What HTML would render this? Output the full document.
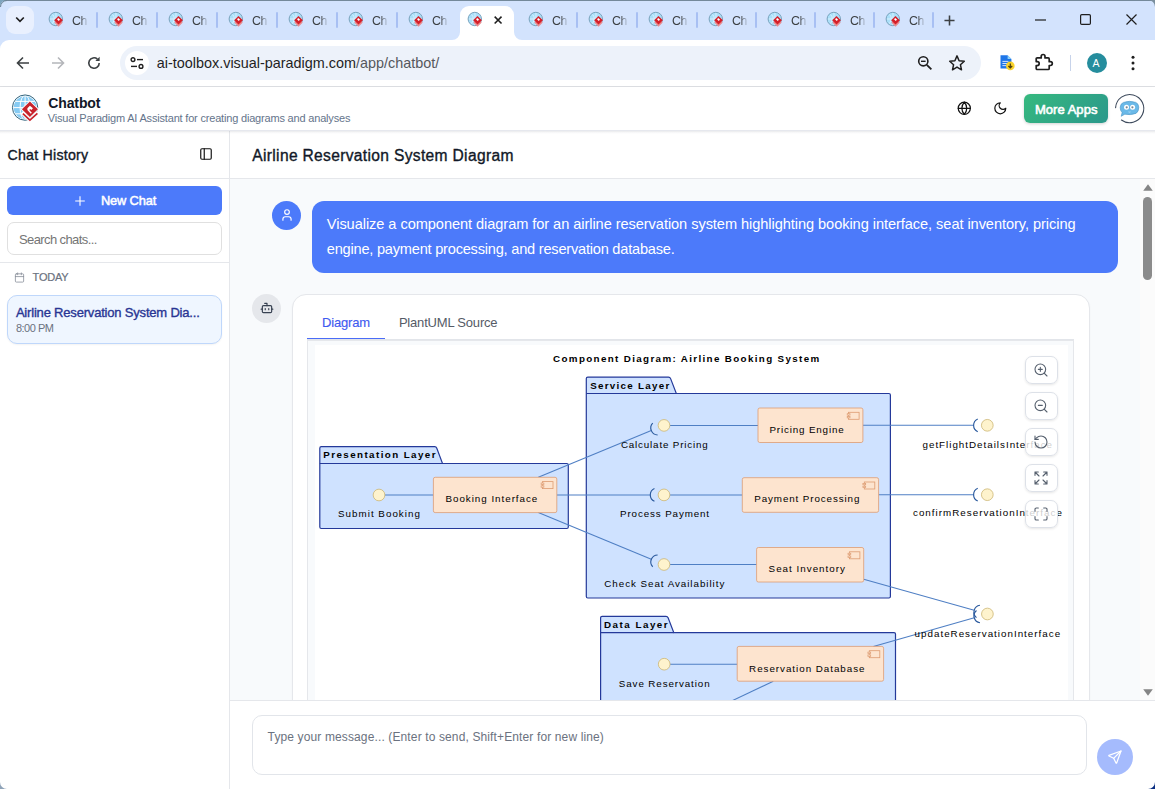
<!DOCTYPE html>
<html>
<head>
<meta charset="utf-8">
<title>Chatbot</title>
<style>
*{box-sizing:border-box;margin:0;padding:0}
html,body{width:1155px;height:789px;overflow:hidden;background:#fff}
body{font-family:"Liberation Sans",sans-serif;position:relative;color:#1f2937}
.abs{position:absolute}
.t{position:absolute;white-space:nowrap;line-height:1}
svg{position:absolute;overflow:visible}
/* ---------- browser chrome ---------- */
#tabstrip{left:0;top:0;width:1155px;height:52px;background:#d3e3fd}
#winedge{left:0;top:0;width:1155px;height:1px;background:#74899a}
#toolbar{left:0;top:40px;width:1155px;height:46px;background:#fff;border-radius:9px 0 0 0}
#tbline{left:0;top:86px;width:1155px;height:1px;background:#dfe1e5}
#tabsearch{left:6px;top:6px;width:28px;height:28px;border-radius:9px;background:#e9f0fe}
.tabtxt{font-size:12.4px;letter-spacing:-0.55px;color:#3c4043;top:15.3px;-webkit-mask-image:linear-gradient(90deg,#000 55%,rgba(0,0,0,.15) 100%);mask-image:linear-gradient(90deg,#000 55%,rgba(0,0,0,.15) 100%)}
.tabsep{width:2px;height:16px;top:12px;background:#a8c0f3;border-radius:1px}
#acttab{left:460px;top:6px;width:54px;height:34px;background:#fff;border-radius:9px 9px 0 0}
#omni{left:120px;top:46px;width:861px;height:34px;border-radius:17px;background:#edf2fa}
#siteinfo{left:125px;top:51px;width:24px;height:24px;border-radius:12px;background:#fff}
#url{left:156.8px;top:56.3px;font-size:14.4px;color:#1f1f1f;letter-spacing:0px}#url span{color:#55585d}
#avatarA{left:1087px;top:53px;width:20px;height:20px;border-radius:10px;background:#258d9d}
/* ---------- app ---------- */
#apphdr{left:0;top:87px;width:1155px;height:44px;background:#fff;border-bottom:1px solid #e6e8ee;box-shadow:0 1px 2.5px rgba(0,0,0,.13)}
#sidebar{left:0;top:131px;width:230px;height:658px;background:#fff;border-right:1px solid #e5e7eb}
#main{left:230px;top:131px;width:925px;height:658px;background:#fff}
.hline{height:1px;background:#e5e7eb}
#chatarea{left:230px;top:179px;width:925px;height:521px;background:#f8fafc;overflow:hidden}
</style>
</head>
<body>
<!-- ======= BROWSER CHROME ======= -->
<div id="tabstrip" class="abs"></div>
<div id="winedge" class="abs"></div>
<div id="tabsearch" class="abs"></div>
<div id="toolbar" class="abs"></div>
<div id="tbline" class="abs"></div>
<div id="acttab" class="abs"></div>
<div id="omni" class="abs"></div>
<div id="siteinfo" class="abs"></div>
<div id="url" class="t">ai-toolbox.visual-paradigm.com<span>/app/chatbot/</span></div>
<div id="avatarA" class="abs"></div>
<!--CHR-BEGIN-->
<svg width="0" height="0" style="left:0;top:0"><defs>
<g id="fav">
<circle cx="-0.2" cy="0" r="6.7" fill="#aadff9" stroke="#7aa3bd" stroke-width="1"/>
<path d="M-3.5 -4.5Q0 -1 -3.5 4.5M0 -6V6M-6 0H6" stroke="#dff3fd" stroke-width="0.9" fill="none"/>
<path d="M2.5 -0.4 L6.7 3.6 L2.5 7.7 L-1.7 3.6 Z" fill="#e98a8d"/>
<path d="M2.5 -3 L6.9 1.2 L2.5 5.4 L-1.9 1.2 Z" fill="#d5202a"/>
<path d="M2.1 -0.9 L4 0.6 L2.8 2 L1.1 0.6 Z" fill="#fff"/>
</g></defs></svg>
<svg style="left:55.5px;top:19.3px" width="1" height="1"><use href="#fav"/></svg>
<div class="t tabtxt" style="left:72.1px">Ch</div>
<div class="abs tabsep" style="left:96.0px"></div>
<svg style="left:115.5px;top:19.3px" width="1" height="1"><use href="#fav"/></svg>
<div class="t tabtxt" style="left:132.1px">Ch</div>
<div class="abs tabsep" style="left:156.0px"></div>
<svg style="left:175.5px;top:19.3px" width="1" height="1"><use href="#fav"/></svg>
<div class="t tabtxt" style="left:192.1px">Ch</div>
<div class="abs tabsep" style="left:216.0px"></div>
<svg style="left:235.5px;top:19.3px" width="1" height="1"><use href="#fav"/></svg>
<div class="t tabtxt" style="left:252.1px">Ch</div>
<div class="abs tabsep" style="left:276.0px"></div>
<svg style="left:295.5px;top:19.3px" width="1" height="1"><use href="#fav"/></svg>
<div class="t tabtxt" style="left:312.1px">Ch</div>
<div class="abs tabsep" style="left:336.0px"></div>
<svg style="left:355.5px;top:19.3px" width="1" height="1"><use href="#fav"/></svg>
<div class="t tabtxt" style="left:372.1px">Ch</div>
<div class="abs tabsep" style="left:396.0px"></div>
<svg style="left:415.5px;top:19.3px" width="1" height="1"><use href="#fav"/></svg>
<div class="t tabtxt" style="left:432.1px">Ch</div>
<svg style="left:535.5px;top:19.3px" width="1" height="1"><use href="#fav"/></svg>
<div class="t tabtxt" style="left:552.1px">Ch</div>
<div class="abs tabsep" style="left:576.0px"></div>
<svg style="left:595.5px;top:19.3px" width="1" height="1"><use href="#fav"/></svg>
<div class="t tabtxt" style="left:612.1px">Ch</div>
<div class="abs tabsep" style="left:636.0px"></div>
<svg style="left:655.5px;top:19.3px" width="1" height="1"><use href="#fav"/></svg>
<div class="t tabtxt" style="left:672.1px">Ch</div>
<div class="abs tabsep" style="left:696.0px"></div>
<svg style="left:715.5px;top:19.3px" width="1" height="1"><use href="#fav"/></svg>
<div class="t tabtxt" style="left:732.1px">Ch</div>
<div class="abs tabsep" style="left:755.0px"></div>
<svg style="left:774.5px;top:19.3px" width="1" height="1"><use href="#fav"/></svg>
<div class="t tabtxt" style="left:791.1px">Ch</div>
<div class="abs tabsep" style="left:814.0px"></div>
<svg style="left:833.5px;top:19.3px" width="1" height="1"><use href="#fav"/></svg>
<div class="t tabtxt" style="left:850.1px">Ch</div>
<div class="abs tabsep" style="left:873.0px"></div>
<svg style="left:892.5px;top:19.3px" width="1" height="1"><use href="#fav"/></svg>
<div class="t tabtxt" style="left:909.1px">Ch</div>
<div class="abs tabsep" style="left:932.0px"></div>
<svg style="left:475.2px;top:19.3px" width="1" height="1"><use href="#fav"/></svg>
<svg style="left:493.8px;top:16px" width="8.2" height="8.2" viewBox="0 0 10 10"><path d="M0.8 0.8L9.2 9.2M9.2 0.8L0.8 9.2" stroke="#1f1f1f" stroke-width="1.9" fill="none"/></svg>
<svg style="left:452px;top:32px" width="8" height="8" viewBox="0 0 8 8"><path d="M8 0V8H0A8 8 0 0 0 8 0Z" fill="#fff"/></svg>
<svg style="left:514px;top:32px" width="8" height="8" viewBox="0 0 8 8"><path d="M0 0V8H8A8 8 0 0 1 0 0Z" fill="#fff"/></svg>
<svg style="left:15px;top:16px" width="10" height="8" viewBox="0 0 10 8"><path d="M1.2 1.5L5 5.3L8.8 1.5" stroke="#1f1f1f" stroke-width="1.7" fill="none"/></svg>
<svg style="left:944.4px;top:14.5px" width="11" height="11" viewBox="0 0 12 12"><path d="M6 0.5V11.5M0.5 6H11.5" stroke="#3c4043" stroke-width="1.7" fill="none"/></svg>
<svg style="left:1035px;top:19px" width="11" height="2" viewBox="0 0 11 2"><path d="M0 1H11" stroke="#1f1f1f" stroke-width="1.2"/></svg>
<svg style="left:1080px;top:14px" width="11" height="11" viewBox="0 0 11 11"><rect x="0.6" y="0.6" width="9.8" height="9.8" rx="1.2" fill="none" stroke="#1f1f1f" stroke-width="1.2"/></svg>
<svg style="left:1126px;top:14px" width="11" height="11" viewBox="0 0 11 11"><path d="M0.5 0.5L10.5 10.5M10.5 0.5L0.5 10.5" stroke="#1f1f1f" stroke-width="1.2"/></svg>
<svg style="left:15.6px;top:56px" width="14" height="14" viewBox="0 0 14 14"><path d="M13 7H2M7 1.5L1.5 7L7 12.5" stroke="#3c4043" stroke-width="1.6" fill="none"/></svg>
<svg style="left:51px;top:56px" width="14" height="14" viewBox="0 0 14 14"><path d="M1 7H12M7 1.5L12.5 7L7 12.5" stroke="#b4b6ba" stroke-width="1.6" fill="none"/></svg>
<svg style="left:87px;top:56px" width="14" height="14" viewBox="0 0 14 14"><path d="M12.2 7A5.2 5.2 0 1 1 10.4 3.1" stroke="#3c4043" stroke-width="1.6" fill="none"/><path d="M12.6 0.8V5H8.4Z" fill="#3c4043"/></svg>
<svg style="left:130px;top:57px" width="14" height="12" viewBox="0 0 14 12"><circle cx="3" cy="2.6" r="1.9" fill="none" stroke="#1f1f1f" stroke-width="1.4"/><path d="M7 2.6H13" stroke="#1f1f1f" stroke-width="1.4"/><circle cx="11" cy="9.4" r="1.9" fill="none" stroke="#1f1f1f" stroke-width="1.4"/><path d="M1 9.4H7" stroke="#1f1f1f" stroke-width="1.4"/></svg>
<svg style="left:917px;top:55px" width="16" height="16" viewBox="0 0 16 16"><circle cx="6.3" cy="6.3" r="4.6" fill="none" stroke="#1f1f1f" stroke-width="1.6"/><path d="M9.8 9.8L14.4 14.4" stroke="#1f1f1f" stroke-width="1.8"/><path d="M4 6.3H8.6" stroke="#1f1f1f" stroke-width="1.4"/></svg>
<svg style="left:948px;top:54px" width="18" height="18" viewBox="0 0 18 18"><path d="M9 1.9L11.1 6.7L16.3 7.2L12.4 10.7L13.5 15.8L9 13.1L4.5 15.8L5.6 10.7L1.7 7.2L6.9 6.7Z" fill="none" stroke="#1f1f1f" stroke-width="1.5" stroke-linejoin="round"/></svg>
<svg style="left:998.5px;top:54px" width="18" height="20" viewBox="0 0 18 20"><path d="M1.5 1.2H8.6L12.4 5V14.4H1.5Z" fill="#1f76e8"/><path d="M8.6 1.2V5H12.4Z" fill="#8fd3f7"/><path d="M3.4 7.4H9.4M3.4 9.5H9.4M3.4 11.6H7.2" stroke="#cfe1fb" stroke-width="1"/><circle cx="11.3" cy="11.9" r="4.3" fill="#f9d22a"/><path d="M11.3 9.5V13.6M9.4 12L11.3 13.9L13.2 12" stroke="#4a3d0c" stroke-width="1.2" fill="none"/></svg>
<svg style="left:1034px;top:53px" width="20" height="19" viewBox="0 0 20 19"><path d="M7.2 4.9V3.4A1.9 1.9 0 0 1 11 3.4V4.9H14.2A1 1 0 0 1 15.2 5.9V8.7H16.4A1.9 1.9 0 0 1 16.4 12.5H15.2V15.5A1 1 0 0 1 14.2 16.5H3.2A1 1 0 0 1 2.2 15.5V12.6H3.2A2 2 0 0 0 3.2 8.6H2.2V5.9A1 1 0 0 1 3.2 4.9Z" fill="none" stroke="#1f1f1f" stroke-width="1.7" stroke-linejoin="round"/></svg>
<div class="abs" style="left:1070px;top:55px;width:1px;height:16px;background:#c7d3ea"></div>
<div class="t" style="left:1092.5px;top:57.5px;font-size:10.5px;color:#fff">A</div>
<svg style="left:1131px;top:55px" width="4" height="16" viewBox="0 0 4 16"><circle cx="2" cy="2.2" r="1.5" fill="#1f1f1f"/><circle cx="2" cy="8" r="1.5" fill="#1f1f1f"/><circle cx="2" cy="13.8" r="1.5" fill="#1f1f1f"/></svg>
<!--CHR-END-->
<!--CHROME-ICONS-->

<!-- ======= APP ======= -->
<div id="apphdr" class="abs"></div>
<div id="sidebar" class="abs"></div>
<div id="main" class="abs"></div>
<div id="chatarea" class="abs">
<!--CHAT-BEGIN-->
<div class="abs" style="left:-230px;top:-179px;width:1155px;height:789px">
<div class="abs" style="left:272px;top:200.5px;width:29px;height:29px;border-radius:14.5px;background:#4c7afa"></div>
<svg style="left:279.5px;top:208px" width="14" height="14" viewBox="0 0 24 24" fill="none" stroke="#fff" stroke-width="2" stroke-linecap="round" stroke-linejoin="round"><path d="M19 21v-2a4 4 0 0 0-4-4H9a4 4 0 0 0-4 4v2"/><circle cx="12" cy="7" r="4"/></svg>
<div class="abs" style="left:312px;top:201px;width:806px;height:72px;border-radius:12px;background:#4c7afa"></div>
<div class="t" style="left:326.8px;top:216.6px;font-size:14.6px;font-weight:400;letter-spacing:-0.064px;color:#fff;">Visualize a component diagram for an airline reservation system highlighting booking interface, seat inventory, pricing</div>
<div class="t" style="left:326.8px;top:242.1px;font-size:14.6px;font-weight:400;letter-spacing:-0.221px;color:#fff;">engine, payment processing, and reservation database.</div>
<div class="abs" style="left:252px;top:294px;width:29px;height:29px;border-radius:14.5px;background:#e5e7eb"></div>
<svg style="left:259.5px;top:301.3px" width="14" height="14" viewBox="0 0 24 24" fill="none" stroke="#374151" stroke-width="2" stroke-linecap="round" stroke-linejoin="round"><path d="M12 8V4H8"/><rect width="16" height="12" x="4" y="8" rx="2"/><path d="M2 14h2M20 14h2M15 13v2M9 13v2"/></svg>
<div class="abs" style="left:292.3px;top:294px;width:797.5px;height:460px;border-radius:14px;background:#fff;border:1px solid #e5e7eb;box-shadow:0 1px 2px rgba(0,0,0,.04)"></div>
<div class="t" style="left:321.9px;top:315.8px;font-size:13px;font-weight:400;letter-spacing:-0.146px;color:#3f5bf0;-webkit-text-stroke:0.15px currentColor;">Diagram</div>
<div class="t" style="left:398.9px;top:315.8px;font-size:13px;font-weight:400;letter-spacing:-0.194px;color:#555b66;">PlantUML Source</div>
<div class="abs" style="left:307px;top:339px;width:767px;height:1px;background:#e2e5ea"></div>
<div class="abs" style="left:307px;top:337.6px;width:78px;height:1.5px;background:#4a6cf7"></div>
<div class="abs" style="left:307px;top:340px;width:767px;height:420px;background:#f8fafc;border:1px solid #e5e7eb"></div>
<div class="abs" style="left:315px;top:344.5px;width:753px;height:420px;background:#fff;overflow:hidden">
<!--DIAG-BEGIN-->
<svg style="left:-315px;top:-344.5px" width="1155" height="789" viewBox="0 0 1155 789" font-family="Liberation Sans, sans-serif" font-size="9.8" fill="#000">
<path d="M321.3 446.7H434.7Q436.2 446.7 436.8 448.2L442.5 463.5H566.8Q568.3 463.5 568.3 465.0V527.0Q568.3 528.5 566.8 528.5H321.3Q319.8 528.5 319.8 527.0V448.2Q319.8 446.7 321.3 446.7Z" fill="#cfe2ff" stroke="#24399a" stroke-width="1.2"/><path d="M319.8 463.5H442.5" stroke="#24399a" stroke-width="1.05" fill="none"/><text x="323.3" y="457.9" font-weight="700" textLength="112.2" lengthAdjust="spacing">Presentation Layer</text>
<path d="M587.8 377.1H668.5Q670 377.1 670.6 378.6L676.3 393.5H888.9Q890.4 393.5 890.4 395.0V596.5Q890.4 598 888.9 598H587.8Q586.3 598 586.3 596.5V378.6Q586.3 377.1 587.8 377.1Z" fill="#cfe2ff" stroke="#24399a" stroke-width="1.2"/><path d="M586.3 393.5H676.3" stroke="#24399a" stroke-width="1.05" fill="none"/><text x="590.2" y="388.9" font-weight="700" textLength="79.1" lengthAdjust="spacing">Service Layer</text>
<path d="M602.1 616.3H666.0Q667.5 616.3 668.1 617.8L673.8 632.6H894.0Q895.5 632.6 895.5 634.1V728.5Q895.5 730 894.0 730H602.1Q600.6 730 600.6 728.5V617.8Q600.6 616.3 602.1 616.3Z" fill="#cfe2ff" stroke="#24399a" stroke-width="1.2"/><path d="M600.6 632.6H673.8" stroke="#24399a" stroke-width="1.05" fill="none"/><text x="604" y="628.2" font-weight="700" textLength="63.6" lengthAdjust="spacing">Data Layer</text>
<text x="553.1" y="362.1" font-weight="700" textLength="266.1" lengthAdjust="spacing">Component Diagram: Airline Booking System</text>
<path d="M385 495L433.4 495" stroke="#4f7fc4" stroke-width="1.05" fill="none"/>
<path d="M538.3 477.3L651.3 430.6" stroke="#4f7fc4" stroke-width="1.05" fill="none"/>
<path d="M556.8 494.9L650.3 494.9" stroke="#4f7fc4" stroke-width="1.05" fill="none"/>
<path d="M538.3 512.6L651.3 559.3" stroke="#4f7fc4" stroke-width="1.05" fill="none"/>
<path d="M669.8 425.4L758 425.4" stroke="#4f7fc4" stroke-width="1.05" fill="none"/>
<path d="M669.8 494.9L742.3 494.9" stroke="#4f7fc4" stroke-width="1.05" fill="none"/>
<path d="M669.8 564.5L756.6 564.5" stroke="#4f7fc4" stroke-width="1.05" fill="none"/>
<path d="M862.9 425.3L973.6 425.3" stroke="#4f7fc4" stroke-width="1.05" fill="none"/>
<path d="M878.6 494.7L973.6 494.7" stroke="#4f7fc4" stroke-width="1.05" fill="none"/>
<path d="M863.7 579.3L974.2 610.3" stroke="#4f7fc4" stroke-width="1.05" fill="none"/>
<path d="M873.4 646.4L974.3 617.8" stroke="#4f7fc4" stroke-width="1.05" fill="none"/>
<path d="M669.8 664.2L737.2 664.2" stroke="#4f7fc4" stroke-width="1.05" fill="none"/>
<path d="M773.3 681.2L700 716" stroke="#4f7fc4" stroke-width="1.05" fill="none"/>
<rect x="433.4" y="477.3" width="123.4" height="35.3" rx="1.75" fill="#fde4cf" stroke="#dd9c72" stroke-width="0.8"/><rect x="542.5" y="481.6" width="10.5" height="7" fill="#fde4cf" stroke="#dd9c72" stroke-width="0.8"/><rect x="541.1" y="483.0" width="2.8" height="1.4" fill="#fde4cf" stroke="#dd9c72" stroke-width="0.7"/><rect x="541.1" y="485.8" width="2.8" height="1.4" fill="#fde4cf" stroke="#dd9c72" stroke-width="0.7"/><text x="445.5" y="501.8" textLength="91.8" lengthAdjust="spacing">Booking Interface</text>
<rect x="758" y="408" width="104.9" height="34.5" rx="1.75" fill="#fde4cf" stroke="#dd9c72" stroke-width="0.8"/><rect x="848.6" y="412.3" width="10.5" height="7" fill="#fde4cf" stroke="#dd9c72" stroke-width="0.8"/><rect x="847.2" y="413.7" width="2.8" height="1.4" fill="#fde4cf" stroke="#dd9c72" stroke-width="0.7"/><rect x="847.2" y="416.5" width="2.8" height="1.4" fill="#fde4cf" stroke="#dd9c72" stroke-width="0.7"/><text x="769.4" y="432.9" textLength="74.3" lengthAdjust="spacing">Pricing Engine</text>
<rect x="742.3" y="477.7" width="136.3" height="34.6" rx="1.75" fill="#fde4cf" stroke="#dd9c72" stroke-width="0.8"/><rect x="864.3" y="482.0" width="10.5" height="7" fill="#fde4cf" stroke="#dd9c72" stroke-width="0.8"/><rect x="862.9" y="483.4" width="2.8" height="1.4" fill="#fde4cf" stroke="#dd9c72" stroke-width="0.7"/><rect x="862.9" y="486.2" width="2.8" height="1.4" fill="#fde4cf" stroke="#dd9c72" stroke-width="0.7"/><text x="754.3" y="502" textLength="105.1" lengthAdjust="spacing">Payment Processing</text>
<rect x="756.6" y="547.5" width="107.1" height="34.5" rx="1.75" fill="#fde4cf" stroke="#dd9c72" stroke-width="0.8"/><rect x="849.4" y="551.8" width="10.5" height="7" fill="#fde4cf" stroke="#dd9c72" stroke-width="0.8"/><rect x="848.0" y="553.2" width="2.8" height="1.4" fill="#fde4cf" stroke="#dd9c72" stroke-width="0.7"/><rect x="848.0" y="556.0" width="2.8" height="1.4" fill="#fde4cf" stroke="#dd9c72" stroke-width="0.7"/><text x="768.6" y="572" textLength="76.3" lengthAdjust="spacing">Seat Inventory</text>
<rect x="737.2" y="646.4" width="146.4" height="34.8" rx="1.75" fill="#fde4cf" stroke="#dd9c72" stroke-width="0.8"/><rect x="869.3" y="650.7" width="10.5" height="7" fill="#fde4cf" stroke="#dd9c72" stroke-width="0.8"/><rect x="867.9" y="652.1" width="2.8" height="1.4" fill="#fde4cf" stroke="#dd9c72" stroke-width="0.7"/><rect x="867.9" y="654.9" width="2.8" height="1.4" fill="#fde4cf" stroke="#dd9c72" stroke-width="0.7"/><text x="749.1" y="671.9" textLength="115.4" lengthAdjust="spacing">Reservation Database</text>
<circle cx="379" cy="495" r="5.85" fill="#fef3cd" stroke="#cdb673" stroke-width="0.8"/><text x="338" y="516.8" textLength="81.9" lengthAdjust="spacing">Submit Booking</text>
<circle cx="664" cy="425.4" r="5.85" fill="#fef3cd" stroke="#cdb673" stroke-width="0.8"/><text x="620.9" y="447.7" textLength="86.8" lengthAdjust="spacing">Calculate Pricing</text>
<circle cx="664" cy="494.9" r="5.85" fill="#fef3cd" stroke="#cdb673" stroke-width="0.8"/><text x="620" y="516.6" textLength="89.1" lengthAdjust="spacing">Process Payment</text>
<circle cx="664" cy="564.5" r="5.85" fill="#fef3cd" stroke="#cdb673" stroke-width="0.8"/><text x="604.3" y="586.6" textLength="120.0" lengthAdjust="spacing">Check Seat Availability</text>
<circle cx="664.2" cy="664.2" r="5.85" fill="#fef3cd" stroke="#cdb673" stroke-width="0.8"/><text x="618.8" y="686.7" textLength="90.8" lengthAdjust="spacing">Save Reservation</text>
<circle cx="987.3" cy="425.3" r="5.85" fill="#fef3cd" stroke="#cdb673" stroke-width="0.8"/><text x="922.5" y="447.6" textLength="129.5" lengthAdjust="spacing">getFlightDetailsInterface</text>
<circle cx="987.3" cy="494.7" r="5.85" fill="#fef3cd" stroke="#cdb673" stroke-width="0.8"/><text x="913" y="516.2" textLength="148.9" lengthAdjust="spacing">confirmReservationInterface</text>
<circle cx="987.4" cy="614" r="5.85" fill="#fef3cd" stroke="#cdb673" stroke-width="0.8"/><text x="914.6" y="636.7" textLength="145.5" lengthAdjust="spacing">updateReservationInterface</text>
<path d="M657.62 434.95A7.0 7.0 0 0 1 652.73 423.13" stroke="#2a599d" stroke-width="1.15" fill="none"/>
<path d="M654.45 501.29A7.0 7.0 0 0 1 654.45 488.51" stroke="#2a599d" stroke-width="1.15" fill="none"/>
<path d="M652.73 566.77A7.0 7.0 0 0 1 657.62 554.95" stroke="#2a599d" stroke-width="1.15" fill="none"/>
<path d="M977.75 431.69A7.0 7.0 0 0 1 977.75 418.91" stroke="#2a599d" stroke-width="1.15" fill="none"/>
<path d="M977.75 501.09A7.0 7.0 0 0 1 977.75 488.31" stroke="#2a599d" stroke-width="1.15" fill="none"/>
<path d="M976.48 617.58A7.0 7.0 0 0 1 979.93 605.26" stroke="#2a599d" stroke-width="1.15" fill="none"/>
<path d="M979.96 622.76A7.0 7.0 0 0 1 976.47 610.46" stroke="#2a599d" stroke-width="1.15" fill="none"/>
</svg>
<!--DIAG-END-->
<!--DIAGRAM-->
</div>
<div class="abs" style="left:1024.5px;top:356.3px;width:33.8px;height:27.9px;border-radius:7px;background:rgba(255,255,255,.8);border:1px solid #dde1e8;box-shadow:0 1px 2.5px rgba(0,0,0,.10)"></div>
<svg style="left:1033.4px;top:362.25px" width="16" height="16" viewBox="0 0 24 24" fill="none" stroke="#56606e" stroke-width="1.65" stroke-linecap="round" stroke-linejoin="round"><circle cx="11" cy="11" r="8"/><path d="m21 21-4.3-4.3M11 8v6M8 11h6"/></svg>
<div class="abs" style="left:1024.5px;top:392.3px;width:33.8px;height:27.9px;border-radius:7px;background:rgba(255,255,255,.8);border:1px solid #dde1e8;box-shadow:0 1px 2.5px rgba(0,0,0,.10)"></div>
<svg style="left:1033.4px;top:398.25px" width="16" height="16" viewBox="0 0 24 24" fill="none" stroke="#56606e" stroke-width="1.65" stroke-linecap="round" stroke-linejoin="round"><circle cx="11" cy="11" r="8"/><path d="m21 21-4.3-4.3M8 11h6"/></svg>
<div class="abs" style="left:1024.5px;top:428.3px;width:33.8px;height:27.9px;border-radius:7px;background:rgba(255,255,255,.8);border:1px solid #dde1e8;box-shadow:0 1px 2.5px rgba(0,0,0,.10)"></div>
<svg style="left:1033.4px;top:434.25px" width="16" height="16" viewBox="0 0 24 24" fill="none" stroke="#56606e" stroke-width="1.65" stroke-linecap="round" stroke-linejoin="round"><path d="M3 12a9 9 0 1 0 9-9 9.75 9.75 0 0 0-6.74 2.74L3 8"/><path d="M3 3v5h5"/></svg>
<div class="abs" style="left:1024.5px;top:464.3px;width:33.8px;height:27.9px;border-radius:7px;background:rgba(255,255,255,.8);border:1px solid #dde1e8;box-shadow:0 1px 2.5px rgba(0,0,0,.10)"></div>
<svg style="left:1033.4px;top:470.25px" width="16" height="16" viewBox="0 0 24 24" fill="none" stroke="#56606e" stroke-width="1.65" stroke-linecap="round" stroke-linejoin="round"><path d="m15 15 6 6M15 9l6-6M21 16v5h-5M21 8V3h-5M3 16v5h5M3 21l6-6M3 8V3h5M9 9 3 3"/></svg>
<div class="abs" style="left:1024.5px;top:500.3px;width:33.8px;height:27.9px;border-radius:7px;background:rgba(255,255,255,.8);border:1px solid #dde1e8;box-shadow:0 1px 2.5px rgba(0,0,0,.10)"></div>
<svg style="left:1033.4px;top:506.25px" width="16" height="16" viewBox="0 0 24 24" fill="none" stroke="#56606e" stroke-width="1.65" stroke-linecap="round" stroke-linejoin="round"><path d="M8 3H5a2 2 0 0 0-2 2v3M21 8V5a2 2 0 0 0-2-2h-3M3 16v3a2 2 0 0 0 2 2h3M16 21h3a2 2 0 0 0 2-2v-3"/></svg>
<div class="abs" style="left:1140px;top:179px;width:15px;height:521px;background:#fbfbfb"></div>
<div class="abs" style="left:1143px;top:197px;width:9px;height:83px;border-radius:4.5px;background:#8b8b8b"></div>
<svg style="left:1142.5px;top:184px" width="10" height="7" viewBox="0 0 9 6" preserveAspectRatio="none"><path d="M4.5 0.3L8.8 5.7H0.2Z" fill="#858585"/></svg>
<svg style="left:1142.5px;top:689px" width="10" height="7" viewBox="0 0 9 6" preserveAspectRatio="none"><path d="M4.5 5.7L8.8 0.3H0.2Z" fill="#858585"/></svg>
</div>
<!--CHAT-END-->
<!--CHAT-->
</div>
<!--APP-BEGIN-->
<svg style="left:8px;top:90px" width="36" height="36" viewBox="0 0 36 36">
<defs><clipPath id="gc"><circle cx="17.1" cy="17.6" r="11.6"/></clipPath></defs>
<circle cx="17.1" cy="17.6" r="12.65" fill="#fff" stroke="#2f627b" stroke-width="1"/>
<circle cx="17.1" cy="17.6" r="11.4" fill="#86cbf3"/>
<g clip-path="url(#gc)" stroke="#fff" stroke-width="1" fill="none">
<path d="M17.1 4V31M4 17.6H30M5 11.4H29M5 23.8H29"/>
<ellipse cx="17.1" cy="17.6" rx="5" ry="12.4"/>
</g>
<path d="M21.9 10.4L31.2 19.2L21.9 28.1L12.6 19.2Z" fill="#fff"/>
<path d="M13.6 22.4L21.9 30.3L30.4 22.3" stroke="#fff" stroke-width="3.4" fill="none"/>
<path d="M14.9 23.7L21.9 30.2L29.4 23.3" stroke="#c8232c" stroke-width="1.7" fill="none"/>
<path d="M21.9 11.6L29.9 19.2L21.9 26.9L13.9 19.2Z" fill="#c8232c"/>
<polygon points="19.39,18.34 21.90,15.74 24.95,18.34 23.36,19.98 22.22,18.93 21.26,19.89 23.81,22.72 22.81,23.72 19.39,20.07" fill="#fff"/>
</svg>
<div class="t" style="left:48.3px;top:95.8px;font-size:14px;font-weight:700;letter-spacing:-0.127px;color:#111827;">Chatbot</div>
<div class="t" style="left:47.8px;top:112.6px;font-size:11px;font-weight:400;letter-spacing:-0.185px;color:#64748b;">Visual Paradigm AI Assistant for creating diagrams and analyses</div>
<svg style="left:957px;top:100.8px" width="14.6" height="14.6" viewBox="0 0 24 24" fill="none" stroke="#111" stroke-width="2" stroke-linecap="round" stroke-linejoin="round"><circle cx="12" cy="12" r="10"/><path d="M12 2a14.5 14.5 0 0 0 0 20 14.5 14.5 0 0 0 0-20"/><path d="M2 12h20"/></svg>
<svg style="left:992.7px;top:100.8px" width="14.6" height="14.6" viewBox="0 0 24 24" fill="none" stroke="#111" stroke-width="2" stroke-linecap="round" stroke-linejoin="round"><path d="M12 3a6 6 0 0 0 9 9 9 9 0 1 1-9-9Z"/></svg>
<div class="abs" style="left:1024px;top:94px;width:84px;height:29px;border-radius:6px;background:linear-gradient(135deg,#36b97f 0%,#2b988b 100%);box-shadow:0 1px 3px rgba(0,0,0,.18)"></div>
<div class="t" style="left:1034.9px;top:102.8px;font-size:13px;font-weight:400;letter-spacing:0.049px;color:#fff;-webkit-text-stroke:0.6px currentColor;">More Apps</div>
<svg style="left:1114px;top:93px" width="31" height="31" viewBox="0 0 31 31">
<path d="M1.6 14.6A14.1 14.1 0 1 1 7.4 27" fill="none" stroke="#3d4a5c" stroke-width="1.1" stroke-linecap="round"/>
<path d="M9.5 9.4Q15.5 7.3 21.8 9.4Q24.6 10.6 24.8 14.2Q24.8 18.6 22 20.4Q16 22.4 10.8 21.2L7.2 23.3L8.1 19.6Q6 17.6 6.2 14.2Q6.4 10.6 9.5 9.4Z" fill="#6ab9e8" stroke="#4b93c2" stroke-width="0.6"/>
<circle cx="12.5" cy="14.2" r="2.5" fill="#fff"/><circle cx="18.6" cy="14.2" r="2.5" fill="#fff"/>
<circle cx="12.7" cy="14.3" r="1.1" fill="#7a8794"/><circle cx="18.4" cy="14.3" r="1.1" fill="#7a8794"/>
<path d="M13.9 18.8Q15.5 20.2 17.1 18.8Z" fill="#c9e8f8"/>
</svg>
<div class="t" style="left:7.5px;top:148.1px;font-size:14.2px;font-weight:400;letter-spacing:0.236px;color:#111827;-webkit-text-stroke:0.35px currentColor;">Chat History</div>
<svg style="left:199.1px;top:147px" width="14" height="14" viewBox="0 0 24 24" fill="none" stroke="#111" stroke-width="2" stroke-linecap="round" stroke-linejoin="round"><rect x="3" y="3" width="18" height="18" rx="2"/><path d="M9 3v18"/></svg>
<div class="abs hline" style="left:0;top:178px;width:1155px"></div>
<div class="abs" style="left:7px;top:186px;width:215px;height:29px;border-radius:6px;background:#4c7afa"></div>
<svg style="left:74px;top:195px" width="12" height="12" viewBox="0 0 12 12"><path d="M6 1.2V10.8M1.2 6H10.8" stroke="#fff" stroke-width="1.1" fill="none"/></svg>
<div class="t" style="left:100.9px;top:194.9px;font-size:12.8px;font-weight:400;letter-spacing:-0.123px;color:#fff;-webkit-text-stroke:0.5px currentColor;">New Chat</div>
<div class="abs" style="left:7px;top:222px;width:215px;height:33px;border-radius:7px;background:#fff;border:1px solid #e0e0e0"></div>
<div class="t" style="left:19.0px;top:232.7px;font-size:13px;font-weight:400;letter-spacing:-0.601px;color:#757575;">Search chats...</div>
<div class="abs hline" style="left:0;top:262px;width:229px"></div>
<svg style="left:14px;top:272px" width="11" height="11" viewBox="0 0 24 24" fill="none" stroke="#858b97" stroke-width="1.7" stroke-linecap="round" stroke-linejoin="round"><path d="M8 2v4M16 2v4"/><rect x="3" y="4" width="18" height="18" rx="2"/><path d="M3 10h18"/></svg>
<div class="t" style="left:32.6px;top:271.7px;font-size:11px;font-weight:400;letter-spacing:-0.238px;color:#6b7280;-webkit-text-stroke:0.2px currentColor;">TODAY</div>
<div class="abs" style="left:7px;top:295px;width:215px;height:49px;border-radius:10px;background:#eff6ff;border:1px solid #bfd7fb;box-shadow:0 1px 2px rgba(0,0,0,.05)"></div>
<div class="t" style="left:15.9px;top:305.7px;font-size:13px;font-weight:400;letter-spacing:-0.191px;color:#283593;-webkit-text-stroke:0.35px currentColor;">Airline Reservation System Dia...</div>
<div class="t" style="left:15.9px;top:323.0px;font-size:11px;font-weight:400;letter-spacing:-0.481px;color:#6b7280;">8:00 PM</div>
<div class="t" style="left:252.3px;top:147.8px;font-size:15.6px;font-weight:400;letter-spacing:0.322px;color:#111827;-webkit-text-stroke:0.35px currentColor;">Airline Reservation System Diagram</div>
<div class="abs hline" style="left:230px;top:700px;width:925px"></div>
<div class="abs" style="left:252px;top:715px;width:835px;height:60px;border-radius:10px;background:#fff;border:1px solid #e2e5ea"></div>
<div class="t" style="left:267.6px;top:731.0px;font-size:12px;font-weight:400;letter-spacing:0.127px;color:#6b7280;">Type your message... (Enter to send, Shift+Enter for new line)</div>
<div class="abs" style="left:1097px;top:739px;width:36px;height:36px;border-radius:18px;background:#a5bbfd"></div>
<svg style="left:1107px;top:749px" width="16" height="16" viewBox="0 0 24 24" fill="none" stroke="#fff" stroke-width="1.8" stroke-linecap="round" stroke-linejoin="round"><path d="M21 3L14.5 21a.55.55 0 0 1-1 0L10 14l-7-3.5a.55.55 0 0 1 0-1Z"/><path d="M21 3L10 14"/></svg>
<div class="abs" id="hdrshadow" style="left:0;top:131px;width:1155px;height:3px;background:linear-gradient(180deg,rgba(15,23,42,.09),rgba(15,23,42,.03) 50%,rgba(15,23,42,0))"></div>
<!--APP-END-->
<!--APP-CONTENT-->
<svg style="left:0;top:0" width="7" height="7" viewBox="0 0 7 7"><path d="M0 0H7A7 7 0 0 0 0 7Z" fill="#7ea4bd"/><path d="M0.5 7A6.5 6.5 0 0 1 7 0.5" stroke="#6d8494" stroke-width="1" fill="none"/></svg>
<svg style="left:1148px;top:0" width="7" height="7" viewBox="0 0 7 7"><path d="M7 0H0A7 7 0 0 1 7 7Z" fill="#7b8f9e"/></svg>
<svg style="left:0;top:782px" width="7" height="7" viewBox="0 0 7 7"><path d="M0 7H7A7 7 0 0 1 0 0Z" fill="#8fa3b8"/></svg>
<svg style="left:1148px;top:782px" width="7" height="7" viewBox="0 0 7 7"><path d="M7 7H0A7 7 0 0 0 7 0Z" fill="#0a2e82"/></svg>
</body>
</html>
